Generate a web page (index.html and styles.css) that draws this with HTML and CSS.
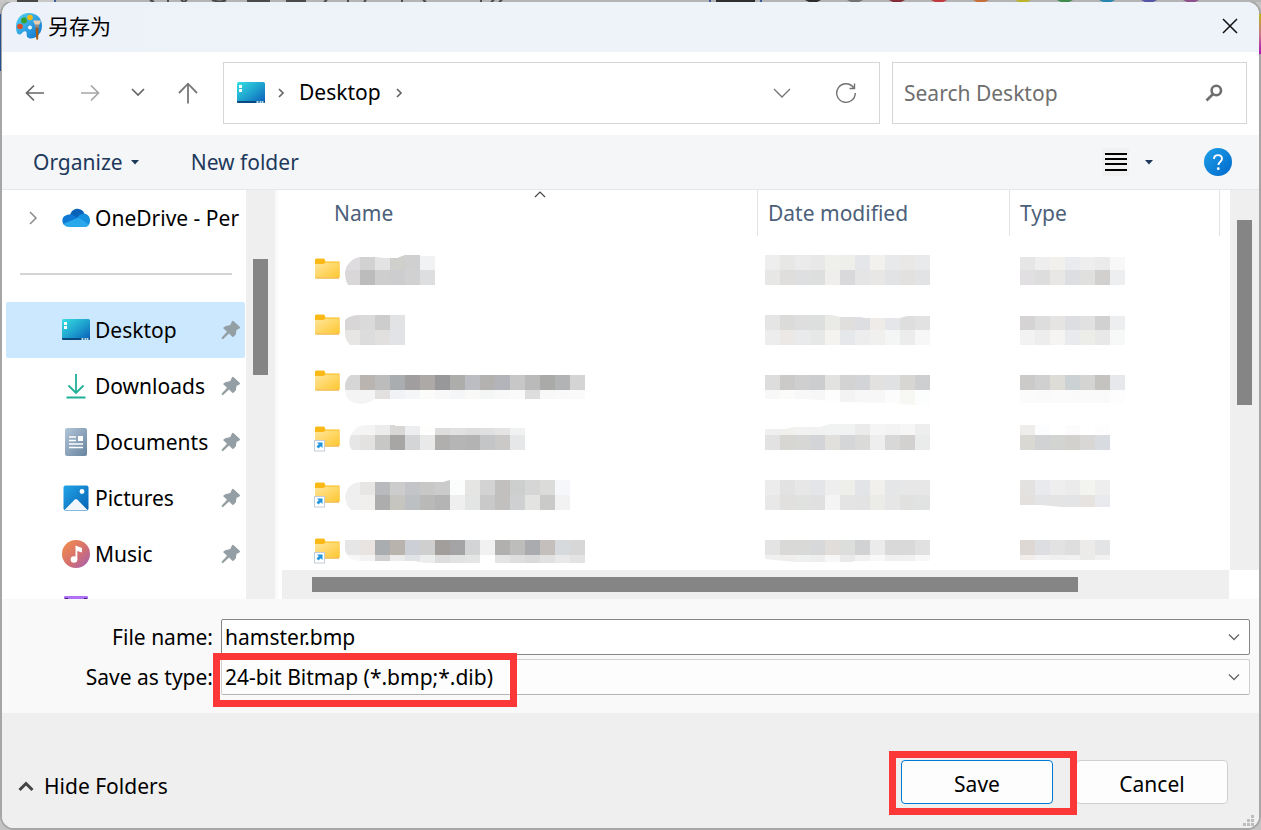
FILE: index.html
```html
<!DOCTYPE html>
<html lang="en">
<head>
<meta charset="utf-8">
<meta name="viewport" content="width=device-width, initial-scale=1">
<title>另存为</title>
<link rel="stylesheet" href="styles.css">
</head>
<body>
<svg class="backdrop-top" width="1261" height="2" aria-hidden="true">
  <path d="M0 0H55V2H0z" fill="#c8c8c8"/>
  <path d="M17 1H38M150 0l4 2M168 0V2M181 0l3 2 3-2M212 0q8 3 14 0M247 1H270M286 1H306M327 0l-3 2M348 0V2M366 0l-2 2M402 0V2M423 0l3 2M481 0V2M494 0l-3 2M502 0l-3 2" fill="none" stroke="#4a4a4a" stroke-width="2"/>
  <path d="M54 0h2v2h-2zM709 0h2v2h-2zM760 0h2v2h-2z" fill="#3a5a9c"/>
  <path d="M716 0h39v2h-39z" fill="#2e2e2e"/>
  <path d="M805 0h16l-4 2h-8z" fill="#2e2e2e"/>
  <path d="M847 0h16l-4 2h-8z" fill="#737373"/>
  <path d="M889 0h16l-4 2h-8z" fill="#852c3a"/>
  <path d="M931 0h16l-4 2h-8z" fill="#c23a40"/>
  <path d="M973 0h16l-4 2h-8z" fill="#c56f3d"/>
  <path d="M1015 0h16l-4 2h-8z" fill="#beb42c"/>
  <path d="M1057 0h16l-4 2h-8z" fill="#3f8c4e"/>
  <path d="M1099 0h16l-4 2h-8z" fill="#2986ae"/>
  <path d="M1141 0h16l-4 2h-8z" fill="#5654a5"/>
  <path d="M1183 0h16l-4 2h-8z" fill="#8d518c"/>
</svg>
<div class="backdrop-left"></div>
<div class="backdrop-right"></div>

<svg class="defs" width="0" height="0" aria-hidden="true">
  <defs>
    <linearGradient id="desk" x1="0" y1="0" x2="1" y2="1"><stop offset="0" stop-color="#37dfe2"/><stop offset=".5" stop-color="#1fa3cf"/><stop offset="1" stop-color="#0a5cb8"/></linearGradient>
    <linearGradient id="fold" x1="0" y1="0" x2="1" y2="1"><stop offset="0" stop-color="#ffe69c"/><stop offset="1" stop-color="#fec72f"/></linearGradient>
    <linearGradient id="doc" x1="0" y1="0" x2="1" y2="1"><stop offset="0" stop-color="#b2c5d8"/><stop offset="1" stop-color="#67849f"/></linearGradient>
    <linearGradient id="pic" x1="0" y1="0" x2="1" y2="1"><stop offset="0" stop-color="#20a4e6"/><stop offset="1" stop-color="#0862b5"/></linearGradient>
    <linearGradient id="mus" x1="0" y1="0" x2="1" y2="1"><stop offset="0" stop-color="#f69148"/><stop offset=".55" stop-color="#d4706f"/><stop offset="1" stop-color="#a35fb8"/></linearGradient>
    <linearGradient id="pal" x1="0" y1="0" x2="1" y2="1"><stop offset="0" stop-color="#55d5f5"/><stop offset="1" stop-color="#0b6fcf"/></linearGradient>
    <linearGradient id="hlp" x1="0" y1="0" x2="1" y2="1"><stop offset="0" stop-color="#1f9fe8"/><stop offset="1" stop-color="#0069cc"/></linearGradient>
    <symbol id="i-desktop" viewBox="0 0 28 22">
      <rect width="28" height="21" rx="1.5" fill="url(#desk)"/>
      <path d="M0 19h28v.8a1.2 1.2 0 0 1-1.2 1.2H1.2A1.2 1.2 0 0 1 0 19.8z" fill="#084a7d"/>
      <path d="M2 3h3v3H2zM2 7h3v3H2z" fill="#fff"/>
      <path d="M19.500 19h2v2h-2zM22.500 19h2v2h-2zM25 19h1.500v2H25z" fill="#b9dcf0"/>
    </symbol>
    <symbol id="i-folder" viewBox="0 0 27 26">
      <path d="M1 2a1.500 1.500 0 0 1 1.500-1.500H9.500q1.500 0 2 3H25.500V19a1.500 1.500 0 0 1-1.500 1.500H2.500A1.500 1.500 0 0 1 1 19z" fill="#fbb917"/>
      <path d="M1 6H9.500L11.500 4.500H25.500V18.500a1.500 1.500 0 0 1-1.500 1.500H2.500A1.500 1.500 0 0 1 1 18.500z" fill="url(#fold)"/>
      <path d="M1.500 20H25" stroke="#efc066" stroke-width="1.200"/>
    </symbol>
    <symbol id="i-shortcut" viewBox="0 0 27 26">
      <use href="#i-folder"/>
      <rect x=".5" y="14.500" width="10" height="10.500" fill="#fff" stroke="#c3ccd8"/>
      <path d="M3 16.500h5.500V22l-1.800-1.800L4.500 22.500 2.500 20.500 4.800 18.300z" fill="#2196dd"/>
    </symbol>
    <symbol id="i-pin" viewBox="0 0 20 20">
      <path d="M11 1.200a1.200 1.200 0 0 1 1.700 0L18.700 6.700a1.200 1.200 0 0 1-.3 1.800L15.500 10 14.800 14.500 11.900 17.200 8 13.500 2.200 19H.8V17.600L6 11.700 2 8 4.300 6.200 9.300 5z" fill="#949fa5"/>
    </symbol>
  </defs>
</svg>

<main class="dialog">
  <header class="titlebar">
    <svg width="27" height="28" viewBox="0 0 27 28" aria-hidden="true">
      <path d="M14 1C6 1 1 7 1 14.500 1 19 2 22.500 4.500 22.500 7 22.500 7.500 19 10 19.200c3 .2.600 4 2.500 6 2 2 6 1.300 8.500-.2 4-2.500 6-6.500 6-11.500C27 6 21.500 1 14 1z" fill="url(#pal)"/>
      <circle cx="15" cy="5.500" r="2.800" fill="#f2bb13"/><circle cx="9" cy="8.500" r="2.900" fill="#35a02c"/><circle cx="5" cy="14.500" r="2.800" fill="#db4a22"/><circle cx="15" cy="15.500" r="2" fill="#e8f8ff"/>
      <path d="M18.500 9.500 18 8.500h8l-.5 1.500-1.500 3h-4z" fill="#e9cfae"/><path d="M20 12.500h4v3h-4z" fill="#8d8d8d"/><path d="M20.500 15.500h3l-.3 11.500-1 1-1-1z" fill="#a35a18"/>
    </svg>
    <h1>另存为</h1>
    <button class="close" type="button" aria-label="Close"><svg width="16" height="16" viewBox="0 0 16 16"><path d="M1 1 15 15M15 1 1 15" fill="none" stroke="#111" stroke-width="1.500"/></svg></button>
  </header>

  <nav class="navbar" aria-label="Navigation">
    <div class="history">
      <button type="button" aria-label="Back"><svg width="20" height="18" viewBox="0 0 20 18"><path d="M19 9H2M9 1.500 1.500 9 9 16.500" fill="none" stroke="#666" stroke-width="1.700"/></svg></button>
      <button type="button" aria-label="Forward"><svg width="20" height="18" viewBox="0 0 20 18"><path d="M1 9h17M11 1.500 18.500 9 11 16.500" fill="none" stroke="#a6a6a6" stroke-width="1.700"/></svg></button>
      <button type="button" aria-label="Recent locations"><svg width="14" height="18" viewBox="0 0 14 18"><path d="M1 5l6 6 6-6" fill="none" stroke="#666" stroke-width="1.700"/></svg></button>
      <button type="button" aria-label="Up"><svg width="20" height="22" viewBox="0 0 20 22"><path d="M10 21.500V2M1 11l9-9.300L19 11" fill="none" stroke="#777" stroke-width="1.800"/></svg></button>
    </div>
    <div class="address">
      <svg width="28" height="22" aria-hidden="true"><use href="#i-desktop"/></svg>
      <svg class="crumb" width="8" height="12" viewBox="0 0 8 12" aria-hidden="true"><path d="M2 2l4 4-4 4" fill="none" stroke="#666" stroke-width="1.700"/></svg>
      <a href="#">Desktop</a>
      <svg class="crumb" width="8" height="12" viewBox="0 0 8 12" aria-hidden="true"><path d="M2 2l4 4-4 4" fill="none" stroke="#666" stroke-width="1.700"/></svg>
      <div class="address-actions">
        <button type="button" aria-label="Previous locations"><svg width="18" height="12" viewBox="0 0 18 12"><path d="M1 2l8 8 8-8" fill="none" stroke="#777" stroke-width="1.400"/></svg></button>
        <button type="button" aria-label="Refresh"><svg width="22" height="22" viewBox="0 0 22 22"><path d="M18.500 5.500A9.300 9.300 0 1 0 20.300 11M19.500 1.500v5h-5" fill="none" stroke="#707070" stroke-width="1.400"/></svg></button>
      </div>
    </div>
    <div class="search">
      <input type="search" placeholder="Search Desktop" aria-label="Search Desktop">
      <button type="button" aria-label="Search"><svg width="18" height="18" viewBox="0 0 18 18"><circle cx="11.300" cy="6.500" r="4.700" fill="none" stroke="#6e6e6e" stroke-width="2.600"/><path d="M8 10 1.500 16.500" stroke="#6e6e6e" stroke-width="2.600"/></svg></button>
    </div>
  </nav>

  <div class="toolbar">
    <button class="organize" type="button">Organize <svg width="8" height="5" viewBox="0 0 8 5"><path d="M0 0h8L4 4.500z" fill="#1e395b"/></svg></button>
    <button type="button">New folder</button>
    <div class="toolbar-end">
      <button class="view" type="button" aria-label="Change view"><svg width="22" height="20" viewBox="0 0 22 20"><path d="M0 1h22v2H0zM0 6h22v2H0zM0 11h22v2H0zM0 17h22v2H0z" fill="#000"/></svg></button>
      <button class="more" type="button" aria-label="More view options"><svg width="8" height="5" viewBox="0 0 8 5"><path d="M0 0h8L4 4.500z" fill="#1e395b"/></svg></button>
      <button class="help" type="button" aria-label="Help"><svg width="28" height="28" viewBox="0 0 28 28"><circle cx="14" cy="14" r="14" fill="url(#hlp)"/><path d="M10 11c0-2.600 1.700-3.900 4-3.900s4 1.300 4 3.700c0 2.900-3.600 2.900-3.600 6.200" fill="none" stroke="#fff" stroke-width="1.900"/><circle cx="14.300" cy="20.700" r="1.400" fill="#fff"/></svg></button>
    </div>
  </div>

  <section class="browser">
    <aside class="places">
      <a class="place" href="#">
        <svg class="expand" width="10" height="14" viewBox="0 0 10 14"><path d="M2 1l6 6-6 6" fill="none" stroke="#8b8b8b" stroke-width="1.500"/></svg>
        <svg width="28" height="20" viewBox="0 0 28 20" aria-hidden="true">
          <path d="M8 7.500C9 3 12 .8 15.500.8c3.500 0 6 2.200 7 5.200L16 12z" fill="#0762b8"/>
          <path d="M1.500 16.500C-.5 13.500-.2 8 5.500 6.700 9.500 5.800 12 7.500 16 10L8 16z" fill="#0f78d4"/>
          <path d="M15 10c2-3.500 5-4.700 7.800-4.200C26.500 6.500 28 9.500 28 12.500c0 2-.5 3.500-1.500 4.500z" fill="#1490df"/>
          <path d="M1.500 15.700 16.500 9.500 27 16.700c-1 1.800-2.500 2.300-4.500 2.300H7c-2.600 0-4.500-1-5.500-3.300z" fill="#29a8ec"/>
        </svg>
        <span>OneDrive - Per</span>
      </a>
      <div class="rule"><hr></div>
      <a class="place current" href="#"><svg width="28" height="22" aria-hidden="true"><use href="#i-desktop"/></svg><span>Desktop</span><svg class="pin" width="20" height="20"><use href="#i-pin"/></svg></a>
      <a class="place" href="#"><svg width="28" height="28" viewBox="0 0 28 28" aria-hidden="true"><path d="M14 2V21M6.500 13.500 14 21l7.500-7.500M4.500 25.500H23.500" fill="none" stroke="#21af98" stroke-width="1.800"/></svg><span>Downloads</span><svg class="pin" width="20" height="20"><use href="#i-pin"/></svg></a>
      <a class="place" href="#"><svg width="28" height="28" viewBox="0 0 28 28" aria-hidden="true"><rect x="3" width="22" height="28" rx="2" fill="url(#doc)"/><path d="M7 9h7M7 12.500h7M7 16h14M7 19.500h14" stroke="#fff" stroke-width="1.600"/><path d="M16 8h5v5h-5z" fill="#fff"/></svg><span>Documents</span><svg class="pin" width="20" height="20"><use href="#i-pin"/></svg></a>
      <a class="place" href="#"><svg width="28" height="28" viewBox="0 0 28 28" aria-hidden="true"><rect x="1.500" y="1.500" width="25" height="25" rx="2" fill="url(#pic)"/><path d="M2.500 26 12.800 15.500a1.700 1.700 0 0 1 2.400 0L25.500 26z" fill="#f2f6fb"/><circle cx="20" cy="7.500" r="2.400" fill="#fff"/></svg><span>Pictures</span><svg class="pin" width="20" height="20"><use href="#i-pin"/></svg></a>
      <a class="place" href="#"><svg width="28" height="28" viewBox="0 0 28 28" aria-hidden="true"><circle cx="14" cy="14" r="14" fill="url(#mus)"/><circle cx="12" cy="19.500" r="3.300" fill="#fff"/><path d="M13.500 5.500 20 8v4.500L15.300 11v8.500h-1.800z" fill="#fff"/></svg><span>Music</span><svg class="pin" width="20" height="20"><use href="#i-pin"/></svg></a>
      <a class="place" href="#" aria-label="Videos"><svg width="28" height="28" viewBox="0 0 28 28" aria-hidden="true"><rect x="2" width="24" height="28" rx="1" fill="#b070f5"/><path d="M3 2h3v2H3zM22 2h3v2h-3z" fill="#402063"/></svg></a>
    </aside>
    <div class="track track-places"><div class="thumb"></div></div>
    <div class="splitter"></div>
    <div class="files">
      <div class="list">
        <table>
          <colgroup><col><col class="col-date"><col class="col-type"><col class="col-end"></colgroup>
          <thead>
            <tr>
              <th class="name-head" aria-sort="ascending"><div>Name<svg class="sort" width="12" height="7" viewBox="0 0 12 7"><path d="M1 6l5-5 5 5" fill="none" stroke="#444" stroke-width="1.200"/></svg></div></th>
              <th><div>Date modified</div></th>
              <th><div>Type</div></th>
              <td></td>
            </tr>
          </thead>
          <tbody id="rows"></tbody>
        </table>
      </div>
      <div class="track track-y"><div class="thumb"></div></div>
      <div class="track track-x"><div class="thumb"></div></div>
    </div>
  </section>

  <form class="fields">
    <label for="filename">File name:</label>
    <div class="combo"><input id="filename" type="text" value="hamster.bmp"><button type="button" aria-label="Show names"><svg width="12" height="8" viewBox="0 0 12 8"><path d="M1 1.500l5 5 5-5" fill="none" stroke="#666" stroke-width="1.300"/></svg></button></div>
    <label for="filetype">Save as type:</label>
    <div class="combo type"><select id="filetype"><option>24-bit Bitmap (*.bmp;*.dib)</option></select><svg width="12" height="8" viewBox="0 0 12 8"><path d="M1 1.500l5 5 5-5" fill="none" stroke="#666" stroke-width="1.300"/></svg><div class="mark mark-type"></div></div>
  </form>

  <footer class="footer">
    <button class="hide" type="button"><svg width="16" height="12" viewBox="0 0 16 12"><path d="M1.500 10 8 3.500 14.500 10" fill="none" stroke="#444" stroke-width="3"/></svg>Hide Folders</button>
    <div class="actions">
      <div class="save-wrap"><button class="btn primary" type="button">Save</button><div class="mark mark-save"></div></div>
      <button class="btn" type="button">Cancel</button>
    </div>
    <svg class="grip" width="12" height="12" viewBox="0 0 12 12" aria-hidden="true"><path d="M8 0h3v3H8zM4 4h3v3H4zM8 4h3v3H8zM0 8h3v3H0zM4 8h3v3H4zM8 8h3v3H8z" fill="#bdbdbd"/></svg>
  </footer>
</main>
<script src="rows.js"></script>
</body>
</html>
```

FILE: styles.css
```css
* { box-sizing: border-box; }

body {
  margin: 0;
  min-height: 100vh;
  padding: 2px;
  display: flex;
  background: #c4c4c4;
  font-family: "Noto Sans", "Noto Sans CJK SC", sans-serif;
  font-size: 21px;
  line-height: 28px;
  color: #000;
  overflow: hidden;
}

button, input, select { font: inherit; color: inherit; }
button { display: flex; align-items: center; justify-content: center; padding: 0; border: 0; background: none; }
a { color: inherit; text-decoration: none; }
svg { display: block; flex: none; }

.defs { position: absolute; }
.backdrop-top, .backdrop-left, .backdrop-right { position: absolute; z-index: 1; }
.backdrop-top { top: 0; left: 0; background: #b4b4b4; }
.backdrop-left { left: 0; top: 14px; width: 1px; height: 57px; background: #254f90; }
.backdrop-right { right: 0; top: 14px; width: 2px; height: 40px; background: linear-gradient(#b8b414, #c77a88 50%, #a814b8); }

.dialog {
  position: relative;
  flex: 1;
  min-width: 0;
  height: calc(100vh - 4px);
  display: flex;
  flex-direction: column;
  border-radius: 12px;
  overflow: hidden;
  background: #fff;
  box-shadow: 0 0 0 2px #a6a6a6;
}

.titlebar { display: flex; align-items: center; gap: 6px; height: 50px; padding: 0 21px 2px 13px; background: linear-gradient(90deg, #edf2fa, #edf3f8 35%); }
.titlebar h1 { flex: 1; margin: 0; padding-bottom: 2px; font-family: "Noto Sans CJK SC", sans-serif; font-size: 21px; font-weight: 400; }

.navbar { display: grid; grid-template-columns: 195px 657fr 355fr; column-gap: 12px; height: 83px; padding: 10px 12px 11px 14px; }
.history { display: grid; grid-template-columns: 38px 72px 24px 76px; align-items: center; }
.address { display: flex; align-items: center; border: 1px solid #d6d6d6; padding: 0 22px 0 13px; }
.address a { margin: 0 14px; padding-bottom: 2px; }
.crumb { margin-left: 12px; }
.address a + .crumb { margin-left: 0; }
.address-actions { display: flex; gap: 44px; margin-left: auto; }
.search { display: flex; align-items: center; min-width: 0; border: 1px solid #d6d6d6; padding: 0 23px 0 11px; }
.search input { flex: 1; min-width: 0; padding: 0; border: 0; outline: 0; background: none; appearance: none; }
.search input::placeholder { color: #6e6e6e; opacity: 1; }

.toolbar { display: flex; align-items: center; gap: 52px; height: 55px; padding: 0 27px 0 31px; background: #f4f6f8; border-bottom: 1px solid #e6e8ea; color: #1e395b; }
.organize { gap: 8px; }
.toolbar-end { display: flex; align-items: center; margin-left: auto; }
.view { width: 27px; height: 28px; background: #f1f1f1; border-radius: 2px; }
.more { margin: 0 51px 0 16px; }

.browser { flex: 1; min-height: 0; display: flex; overflow: hidden; }
.places { width: 244px; padding: 0 1px 0 4px; overflow: hidden; }
.place { display: grid; grid-template-columns: 28px 1fr 20px; align-items: center; column-gap: 5px; height: 56px; padding: 0 4px 0 56px; white-space: nowrap; border-radius: 2px; }
.place:first-child { grid-template-columns: 29px 28px 1fr; padding: 0 0 0 22px; }
.current { background: #cce8ff; }
.rule { height: 56px; padding: 27px 13px 0 14px; }
.rule hr { margin: 0; border: 0; height: 2px; background: #d4d4d4; }

.track { display: grid; background: #efefef; }
.thumb { background: #858585; }
.track-places { width: 29px; grid-template-rows: 69fr 116fr 224fr; padding: 0 7px; }
.track-places .thumb, .track-y .thumb { grid-row: 2; }
.splitter { width: 7px; border-right: 4px solid #fff; background: #fafafa; }

.files { flex: 1; min-width: 0; display: grid; grid-template-columns: 1fr 30px; grid-template-rows: minmax(0, 1fr) 29px; }
.list { overflow: hidden; min-height: 0; }
.track-y { grid-template-rows: 30fr 185fr 165fr; padding: 0 7px; margin-left: 1px; }
.track-x { grid-template-columns: 30fr 766fr 151fr; padding: 7px 0; }
.track-x .thumb { grid-column: 2; }

table { width: 100%; table-layout: fixed; border-collapse: collapse; }
.col-date { width: 252px; }
.col-type { width: 210px; }
.col-end { width: 9px; }
th { height: 52px; padding: 0; vertical-align: top; text-align: left; font-weight: 400; color: #4c607a; }
th div { height: 46px; padding: 9px 10px; border-right: 1px solid #e3e3e3; }
.name-head div { position: relative; margin-left: 41px; padding-left: 11px; }
.sort { position: absolute; top: 1px; left: calc(50% - 6px); }
tbody td { height: 56px; padding: 0 0 0 10px; }
tbody td:nth-child(2) { padding-left: 7px; }
tbody td:first-child { padding-left: 32px; }
.file { display: flex; align-items: center; gap: 4px; }
.folder { margin-top: 2px; }

.fields { display: grid; grid-template-columns: 211px 1fr; column-gap: 8px; row-gap: 4px; align-items: center; height: 114px; padding: 20px 9px 18px 0; background: #f9f9f9; }
.fields label { text-align: right; }
.combo { position: relative; display: flex; align-items: center; height: 36px; padding: 0 9px 0 0; background: #fff; border: 1px solid #858585; border-radius: 2px; }
.combo input, .combo select { flex: 1; min-width: 0; height: 34px; padding: 0 0 0 3px; border: 0; outline: 0; background: none; appearance: none; }
.type { background: #fdfdfd; border-color: #cfcfcf; border-bottom-color: #b5b5b5; }
.mark { position: absolute; border: 7px solid #fb3737; pointer-events: none; }
.mark-type { left: -9px; top: -7px; width: 304px; height: 54px; }

.footer { position: relative; display: flex; align-items: center; justify-content: space-between; height: 115px; padding: 23px 31px 0 16px; background: #efefef; }
.hide { gap: 10px; padding-top: 8px; }
.actions { display: flex; gap: 23px; }
.save-wrap { position: relative; }
.btn { width: 152px; height: 44px; padding-top: 3px; background: #fdfdfd; border: 1px solid #d0d0d0; border-radius: 4px; }
.primary { border-color: #0078d4; }
.mark-save { inset: -9px -24px -11px -12px; }
.grip { position: absolute; right: 4px; bottom: 1px; }
```

FILE: rows.js
```js
// Each redacted value is a mosaic: bands of 15px cells as [top, height, colours], plus an optional outline.
const files = [
  {
    name: { bands: [[13, 15, "dedcde d2d2d2 e3e3e4 cfcfcc d0d0d0 f1f2f4"], [28, 15, "dad7d8 bcbcbc cecece cdcdcf d1d1d1 dddee0"]], outline: "M3 43Q0 38 0 30Q2 18 14 15H32L38 16H52L60 13H75V14H90V43Z" },
    date: { bands: [[13, 15, "eeeeee e7e8e5 ebebeb e8e8e8 efefec eeeeeb e4e6e9 f3f1ee e8e9eb e9e8e6 e9eaec"], [28, 15, "e7e7e5 e0dedc dddfe1 dcdfdd efeeec d9d9dc e5e5e5 e8e7e6 e1e3e5 e3e1df e1e3e5"]] },
    type: { bands: [[15, 13, "e6e6e7 eeeeee f2f0ed e9ebef eeeeee ebebeb f8f8f8"], [28, 15, "e1dfe1 dddddd e8e7e5 dddee1 e0e0df d1d0ce edeef0"]] }
  },
  {
    name: { bands: [[17, 15, "d9d6d8 dadadb cdcdcd e1e3e5"], [32, 15, "e8e6e5 dcdcdd e2e0de e1e3e6"]], outline: "M5 47Q0 42 0 36V22Q5 17 15 17H60V47Z" },
    date: { bands: [[17, 15, "e5e5e5 dbdcd9 dedede dddede eaeae7 e1dfdd dddee1 eeebe8 e4e6e9 dedede e2e2e2"], [32, 15, "ededee ebe8e6 e8eaec e5e8e6 f5f3f0 e5e7eb ededee f0f0ef f4f6f5 ececec f7f7f7"]], outline: "M0 17H67L75 19H95L100 20H135L142 18H165V47H0Z" },
    type: { bands: [[18, 14, "d6d3d5 dddddd e5e4e2 dddee1 e1e1e1 d1d1d1 edeef0"], [32, 15, "f2f2f3 ededee f6f4f2 e9eaee ecece9 e8e8e8 f7f8f8"]] }
  },
  {
    name: { bands: [[21, 15, "d6d6d6 b9b4b0 bcbcbc a9adb0 a09e9e ada9a6 98989a adadac bcbdc2 b3b2b1 b2b4b9 c7c7c7 bababa aaaaa8 b1b3b5 d4d4d4"], [36, 9, "f4f4f4 f4f4f4 e2e1e0 f0f2f5 f5f6f7 fbfbf9 f8f8f8 f5f6f7 f9faf8 f4f6f6 f8f8f8 fafafa dddddd f8f8f8 f9f9f9 fafafa"], [45, 5, "f4f4f4 f4f4f4"]], outline: "M0 30Q2 23 6 21H240V45H30Q15 55 3 45Q0 42 0 30Z" },
    date: { bands: [[21, 15, "dddddd cbcac8 cfcfcf cccdcf e2e3e0 d3d3d3 d2d4d7 e3e1df dfe1e3 d7d6d2 cdcfd1"], [36, 15, "f8f8f8 fbfbf9 f8f8f8 f7f7f7 fdfdfd f3f3f3 f7f7f7 f7f7f7 fcfcfc f7f7f4 fcfefd"]], outline: "M0 21H165V51H150L125 49 80 48 40 45H0Z" },
    type: { bands: [[21, 15, "cbcac8 d0d0d0 dddcd7 ccd1d4 d4d5d2 c4c3c0 e7e8eb"], [36, 13, "fbfbfb fafafa fbfbfb fafafa fafafa fafafa fdfdfd"]] }
  },
  {
    link: true,
    name: { bands: [[15, 10, "f4f5f5 f4f4f4 ececed d9d7d6 edeef0 fefefc dddddd e1e1e1 dddddd e0e0e0 e4e4e4 f0f2f1"], [25, 15, "e6e6e6 e3e2e0 c7c7c6 a7a6a4 d4d5d6 e9e9e9 b0afae b5b5b5 b3b3b3 c3c5c7 cbc9c8 e5e7e8"]], outline: "M7 40Q2 34 6 25Q10 15 22 15H50V16H90V18H180V40Z" },
    date: { bands: [[14, 11, "efefef f0f0ed f2f2f2 f1f1f1 f1f3f2 f0f3f2 ebebeb f5f5f5 f3f3f3 f6f6f6 eeeeee"], [25, 15, "e2e2e2 d7d6d3 d7d7d6 d3d4d7 e1e0dd d4d6d8 dadbd9 eeeeee d8d8d8 d2d1cf eaeceb"]], outline: "M0 19H20L30 17H55L65 14H165V40H0Z" },
    type: { bands: [[15, 10, "eeedeb fbfdfe ffffff fcfcfc ffffff fdfdfd"], [25, 15, "d9d8d3 d1d2d4 d2d4d2 d2d1ce d9d7d5 d8dce0"]] }
  },
  {
    link: true,
    name: { bands: [[14, 15, "efefef e8e6e5 b9babd cccccc c3c4c8 c8c8c7 cbcbcb fbfdfc e5e5e4 d3d3d3 c2c0be cdcfce d5d6d5 dbdbda f6f7fb"], [29, 15, "efefef f0efed adadad c7c5bf bdc0c3 b9b9b7 b4b4b4 efefef e3e5e4 c9c9c9 c2c0be cfd0d2 e3e3e2 cacac9 f2f2f2"]], outline: "M6 44Q0 38 0 30Q3 17 15 16H98L105 14H225V44Z" },
    date: { bands: [[14, 15, "ececec e2e2e2 e7e7e7 e3e5e9 eeeeee eeeeeb e2e4e7 f2f0ed e4e6e8 e7e7e7 e7e7e7"], [29, 15, "e8e8e8 e2e0de dfe2df e0e0e0 f4f4f4 e4e4e4 e3e3e3 ebebe8 e6e6e6 e1e1df e0e3e1"]] },
    type: { bands: [[14, 15, "e4e2e0 e8eaed eeeeee ebebec f3f3f0 eeeeee"], [29, 12, "e3e0de e3e4e5 e4e4e5 e3e4e5 e6e3e0 e8eaed"]], outline: "M0 14H90V41H42L21 39H0Z" }
  },
  {
    link: true,
    name: { bands: [[18, 15, "e6e6e6 e9e4e1 a9adb0 b8b3ad ccd0d6 cfcfcf a19e9c a4a4a6 d2d4d5 f1f1f1 b1b0af bdbdbc aaabae c4bfbc d6dadd d7d7d7"], [33, 8, "f7f7f7 f3f3f3 d0d0d0 ececec e1e3e7 ebeeec dddddd e1e3e3 e3e6e4 ffffff e4e4e4 dedede dadada e1e1e1 e9e9e9 e3e3e3"]], outline: "M0 18H240V41H80L70 39H15Q2 38 0 28Z" },
    date: { bands: [[18, 15, "e4e4e4 d9d9d7 d9d9d8 d7d8da e0dddb dcdedc d1d2d4 ebebeb d9d9d9 d9d9d9 e1e1e1"], [33, 7, "f0f0f0 f0eeec eef1ef eeeeee f7f7f7 e9e9e9 f2f2f2 f8f8f8 f0f0f0 f1f1f1 f8f8f8"]], outline: "M0 18H165V39H90L85 40H30L0 37Z" },
    type: { bands: [[18, 15, "ddd8d4 dddee2 e2e2e2 dedede ecebe9 e3e4e6"], [33, 5, "f0edeb f2f2f2 f0f0f0 f1f1f1 ebebe9 f2f2f2"]] }
  }
];

function mosaic({ bands, outline }, id) {
  let width = 0;
  const cells = bands.map(([y, h, colours]) => colours.split(" ").map((c, i) => {
    width = Math.max(width, (i + 1) * 15);
    return `<rect x="${i * 15}" y="${y}" width="15" height="${h}" fill="#${c}"/>`;
  }).join("")).join("");
  const clip = outline ? `<clipPath id="${id}"><path d="${outline}"/></clipPath>` : "";
  return `<svg width="${width}" height="56" shape-rendering="crispEdges" aria-hidden="true">${clip}<g${outline ? ` clip-path="url(#${id})"` : ""}>${cells}</g></svg>`;
}

document.getElementById("rows").innerHTML = files.map((f, i) => `<tr>
  <td><div class="file"><svg class="folder" width="27" height="26" aria-hidden="true"><use href="#${f.link ? "i-shortcut" : "i-folder"}"/></svg>${mosaic(f.name, "n" + i)}</div></td>
  <td>${mosaic(f.date, "d" + i)}</td><td>${mosaic(f.type, "t" + i)}</td><td></td></tr>`).join("");
```
